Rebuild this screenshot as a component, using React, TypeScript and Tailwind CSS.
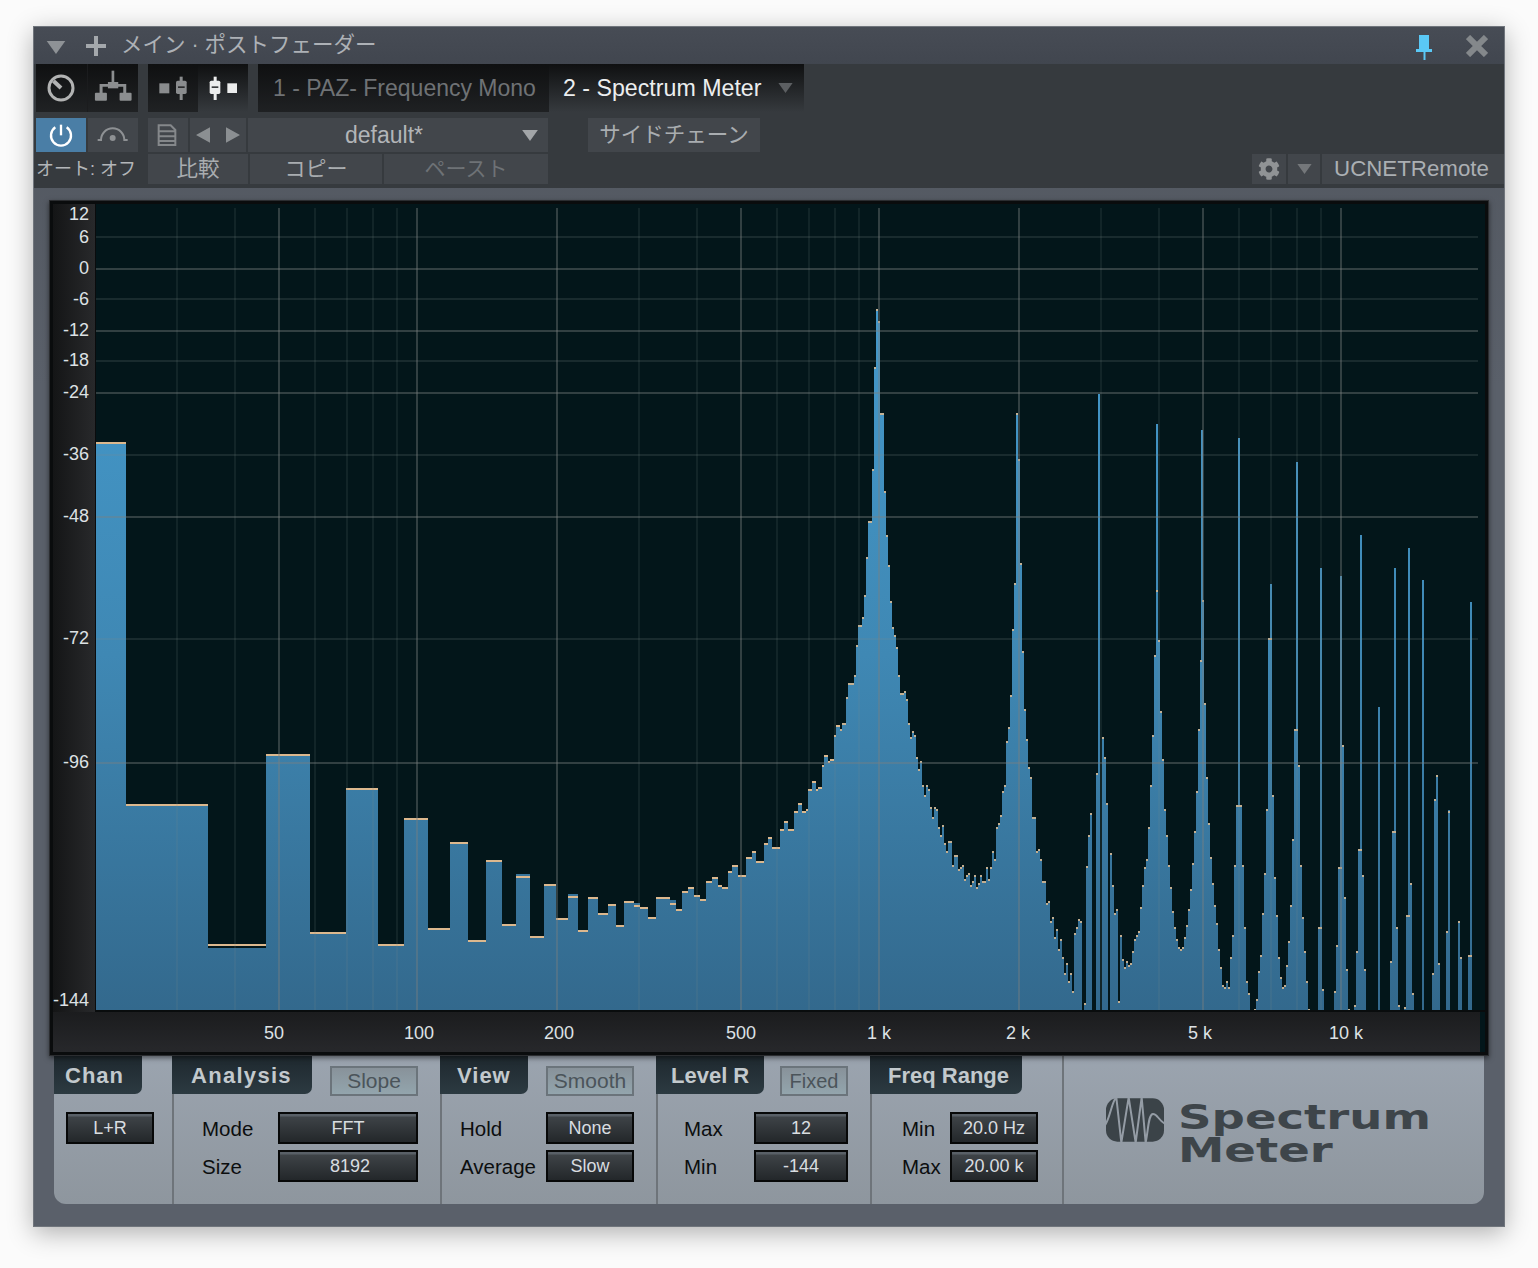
import React from "react";
import { FaCog } from "react-icons/fa";

const DATA = `96:442 126:804 208:944:948 266:754 310:932 346:788 378:944 404:818 428:928 450:842 468:940 486:860 502:924 516:876:874 530:936 544:884 556:918 568:896:894 578:930 588:897 598:913 608:904 616:925 624:901 634:905:903 640:907 648:917 656:897 670:903:900 676:909 682:891 688:887 694:895 700:899 706:881 712:877 718:885 722:887 728:871 732:865 738:875 746:857 752:851 756:861 764:843 768:837 772:847 780:829 784:821 788:829 794:811 798:803 802:811 806:809 808:789 812:781 816:789 818:787 822:765 824:755 828:761 830:759 834:735 836:725 840:729 842:723 846:697 848:683 854:675 856:645 858:625 862:617 864:595 866:557 868:521 872:469 874:367 876:309 878:321 880:413 884:491 886:535 888:565 890:601 892:627 894:635 896:647 898:675 900:693 904:691 906:699 908:723 910:737 912:731 914:735 916:757 918:769 920:761 922:785 924:795 926:785 928:789 930:807 932:817 934:807 936:809 938:827 940:835 942:825 944:843 946:851 948:841 952:865 954:855 958:869 960:867 962:865 964:879 966:875 968:873 970:885 972:881 974:875 976:887 978:883 980:875 982:881 986:867 988:879 990:867 992:851 994:859 996:827 998:823 1000:815 1002:791 1004:785 1006:741 1008:727 1010:695 1012:629 1014:583 1016:413 1018:459 1020:563 1022:651 1024:709 1026:739 1028:767 1030:777 1032:817 1036:851 1038:849 1040:859 1042:881 1046:903 1048:901 1050:921 1052:917 1054:937 1056:929 1058:949 1060:939 1062:957 1064:973 1066:963 1068:981 1070:973 1072:991 1074:933 1076:927 1078:919 1080:921 1082:1010 1084:1003 1086:866 1088:835 1090:813 1092:1010 1096:773 1098:1010 1102:737 1104:757 1106:803 1108:1010 1110:853 1112:885 1114:913 1116:909 1118:1001 1120:935 1122:959 1124:967 1126:961 1128:965 1130:963 1132:951 1134:939 1136:935 1138:931 1140:907 1142:885 1144:867 1146:859 1148:827 1150:785 1152:735 1154:655 1156:590 1158:640 1160:711 1162:759 1164:809 1166:835 1168:865 1170:887 1172:911 1174:927 1176:939 1178:947 1180:949 1182:947 1184:937 1186:925 1188:909 1190:889 1192:863 1194:831 1196:791 1198:729 1200:660 1202:600 1204:703 1206:777 1208:823 1210:857 1212:883 1214:905 1216:923 1218:949 1220:967 1222:985 1224:987 1226:981 1228:987 1230:957 1232:935 1234:865 1236:805 1238:805 1240:805 1242:865 1244:927 1246:981 1248:993 1250:1010 1254:1009 1256:999 1258:971 1260:955 1262:913 1264:873 1266:809 1268:638 1272:795 1274:877 1276:915 1278:957 1280:977 1282:987 1284:985 1286:965 1288:941 1290:905 1292:839 1294:729 1296:729 1298:765 1300:865 1302:917 1304:951 1306:981 1308:1009 1310:1010 1318:927 1320:927 1322:989 1324:1010 1334:991 1336:945 1338:867 1340:867 1342:745 1344:897 1346:969 1348:1009 1350:1010 1354:1005 1356:951 1358:849 1360:849 1362:875 1364:969 1366:1010 1378:1010 1390:961 1392:831 1394:831 1396:927 1398:1005 1400:1010 1404:1007 1406:915 1408:915 1410:883 1412:993 1414:1010 1432:973 1434:799 1436:775 1438:963 1440:1010 1446:931 1448:811 1450:1010 1458:921 1460:957 1462:1010 1468:955 1470:955 1472:1010 1478:1010`;

const cols = DATA.split(" ").map((s) => s.split(":").map(Number));
const areaPath = (() => {
  let d = "M96 1010";
  for (let i = 0; i < cols.length - 1; i++) {
    const [x, y, top] = cols[i];
    const t = top ?? y;
    const nx = cols[i + 1][0];
    d += `L${x} ${t}L${nx} ${t}`;
  }
  return d + "L1478 1010Z";
})();
const spikes = [
  [1098, 394], [1156, 424], [1201, 430], [1238, 438], [1270, 584], [1296, 462], [1320, 568], [1340, 576],
  [1360, 535], [1378, 707], [1394, 568], [1408, 548], [1422, 580], [1448, 810], [1470, 602],
];
const minorV = [177, 235, 315, 347, 373, 397, 639, 697, 777, 809, 835, 859, 1101, 1159, 1239, 1271, 1297, 1321];
const mainV = [279, 417, 557, 741, 879, 1019, 1203, 1341];
const minorH = [237, 299, 361, 455, 639];
const mainH = [269, 331, 393, 517, 763];
const yLabels: [string, number][] = [
  ["12", 214], ["6", 237], ["0", 268], ["-6", 299], ["-12", 330], ["-18", 360], ["-24", 392],
  ["-36", 454], ["-48", 516], ["-72", 638], ["-96", 762], ["-144", 1000],
];
const xLabels: [string, number][] = [
  ["50", 274], ["100", 419], ["200", 559], ["500", 741], ["1 k", 879], ["2 k", 1018], ["5 k", 1200], ["10 k", 1346],
];

function Spectrum() {
  return (
    <svg width="1390" height="808" viewBox="95 204 1390 808" className="block">
      <defs>
        <linearGradient id="blue" gradientUnits="userSpaceOnUse" x1="0" y1="300" x2="0" y2="1010">
          <stop offset="0" stopColor="#4499cb" />
          <stop offset="0.5" stopColor="#3f88b4" />
          <stop offset="1" stopColor="#33698d" />
        </linearGradient>
      </defs>
      <path d={areaPath} fill="url(#blue)" />
      {spikes.map(([x, y]) => (
        <rect key={x} x={x} y={y} width="2" height={1010 - y} fill="url(#blue)" />
      ))}
      {cols.slice(0, -1).map(([x, y], i) =>
        y >= 1010 ? null : <rect key={x} x={x} y={y} width={cols[i + 1][0] - x} height="2" fill="#dcb88e" opacity={i < 3 || x < 840 ? 1 : 0.85} />
      )}
      {minorV.map((x) => <rect key={x} x={x - 1} y="208" width="2" height="802" fill="#7f8a8c" opacity="0.13" />)}
      {minorH.map((y) => <rect key={y} x="96" y={y - 1} width="1382" height="2" fill="#7f8a8c" opacity="0.18" />)}
      {mainV.map((x) => <rect key={x} x={x - 1} y="208" width="2" height="802" fill="#7b7f80" opacity="0.4" />)}
      {mainH.map((y) => <rect key={y} x="96" y={y - 1} width="1382" height="2" fill="#7b7f80" opacity="0.4" />)}
      <rect x="95" y="1010" width="1390" height="2" fill="#090c0d" />
      <rect x="95" y="204" width="1" height="806" fill="#0a0c0d" />
    </svg>
  );
}

function Caret({ className }: { className: string }) {
  return (
    <svg viewBox="0 0 20 14" className={className} fill="currentColor"><path d="M0 0H20L10 14Z" /></svg>
  );
}

const ToolCell = ({ className, children }: { className: string; children?: React.ReactNode }) => (
  <div className={`flex items-center justify-center h-full bg-[#42464b] ${className}`}>{children}</div>
);

function Btn({ w, children }: { w: string; children: React.ReactNode }) {
  return (
    <div className={`${w} h-[32px] border-2 border-[#070808] bg-[linear-gradient(180deg,#596067_0,#596067_2px,#3e4347_3px,#23272a_100%)] text-[18px] text-[#d9dde0] flex items-center justify-center`}>
      {children}
    </div>
  );
}

function Tab({ w, children }: { w: string; children: React.ReactNode }) {
  return (
    <div className={`${w} h-[38px] shrink-0 rounded-br-[7px] bg-[linear-gradient(180deg,#1e282e,#2c3a41)] text-[22px] font-bold text-[#c2c9cd] flex items-center`}>
      {children}
    </div>
  );
}

function Toggle({ w, children, text }: { w: string; children: React.ReactNode; text: string }) {
  return (
    <div className={`${w} h-[30px] mt-[10px] border-2 border-[#6b747b] bg-[linear-gradient(180deg,#88929a,#93a5ad)] ${text} text-[#4b545a] flex items-center justify-center`}>
      {children}
    </div>
  );
}

function Row({ w, label, children }: { w: string; label: string; children: React.ReactNode }) {
  return (
    <div className="flex items-center h-[32px]">
      <span className={`${w} text-[20.5px] text-[#0c0e0f] pt-[2px]`}>{label}</span>
      {children}
    </div>
  );
}

export default function App() {
  return (
    <div className="w-[1538px] h-[1268px] bg-[#fbfbfb] pt-[26px] pl-[33px] font-['Liberation_Sans','Noto_Sans_CJK_JP',sans-serif] overflow-hidden">
      <div className="w-[1472px] h-[1201px] border border-[#70757c] bg-[linear-gradient(180deg,#50555d,#5a606a_30%)] shadow-[0_6px_24px_rgba(0,0,0,0.3)] flex flex-col">
        {/* Title bar */}
        <div className="h-[37px] shrink-0 bg-[linear-gradient(180deg,#474c55,#41464f)] flex items-center pl-[12px] pr-[16px] text-[#adb1b6]">
          <Caret className="w-[20px] h-[13px] text-[#8e9296] mt-[3px]" />
          <svg viewBox="0 0 20 20" className="w-[20px] h-[20px] ml-[20px] text-[#a4a8ac]" fill="currentColor"><path d="M8 0h4v8h8v4h-8v8H8v-8H0V8h8z" /></svg>
          <span className="ml-[15px] text-[21.5px] leading-none whitespace-pre">メイン · ポストフェーダー</span>
          <svg viewBox="0 0 16 25" className="w-[16px] h-[25px] ml-auto mt-[3px]" fill="#5ac8f5"><path d="M3 0h10v14h3v3H9.500v8h-2v-8H0v-3h3z" /></svg>
          <svg viewBox="0 0 22 22" className="w-[22px] h-[22px] ml-[34px] mt-[1px]" stroke="#84888b" strokeWidth="6"><path d="M2 2 20 20M20 2 2 20" /></svg>
        </div>

        {/* Toolbar */}
        <div className="h-[124px] shrink-0 bg-[#363a3e] pl-[2px] flex flex-col">
          <div className="h-[48px] flex shrink-0">
            <div className="w-[102px] flex gap-[1px] bg-[#1b1c1e]">
              <div className="flex-1 bg-[linear-gradient(180deg,#0f1011,#202224)] flex items-center justify-center">
                <svg viewBox="0 0 30 30" className="w-[30px] h-[30px]" fill="none" stroke="#b2b3b3" strokeWidth="3"><circle cx="15" cy="15" r="12" /><path d="M7.500 8 15 15" strokeWidth="4" /></svg>
              </div>
              <div className="flex-1 bg-[linear-gradient(180deg,#0f1011,#202224)]">
                <svg viewBox="156 0 150 144" className="w-full h-full">
                  <g fill="#8c8e90">
                    <rect x="226" y="20" width="8" height="40" />
                    <rect x="215" y="54" width="31" height="19" />
                    <path d="M190 60h80v28h-9V68h-62v20h-9z" />
                    <rect x="176" y="86" width="36" height="24" rx="3" />
                    <rect x="250" y="86" width="36" height="24" rx="3" />
                  </g>
                </svg>
              </div>
            </div>
            <div className="w-[100px] ml-[10px] flex">
              <div className="w-[50px] bg-[linear-gradient(180deg,#0f1011,#202224)]">
                <svg viewBox="336 0 150 144" className="w-full h-full">
                  <g fill="#8a8c8e">
                    <rect x="370" y="58" width="30" height="30" />
                    <rect x="431" y="38" width="9" height="70" />
                    <rect x="420" y="50" width="32" height="40" rx="5" />
                    <rect x="426" y="67" width="20" height="5" fill="#2a2b2c" />
                  </g>
                </svg>
              </div>
              <div className="w-[50px] bg-[linear-gradient(180deg,#0f1011,#363a3e)]">
                <svg viewBox="486 0 150 144" className="w-full h-full">
                  <g fill="#eceded">
                    <rect x="533" y="38" width="9" height="70" />
                    <rect x="521" y="50" width="32" height="40" rx="5" />
                    <rect x="527" y="67" width="20" height="5" fill="#3a3c3e" />
                    <rect x="574" y="58" width="29" height="29" />
                  </g>
                </svg>
              </div>
            </div>
            <div className="w-[291px] ml-[10px] bg-[linear-gradient(180deg,#0f1011,#1f2123)] flex items-center pl-[15px] text-[23px] text-[#6f7275] whitespace-nowrap">
              1 - PAZ- Frequency Mono
            </div>
            <div className="w-[255px] bg-[linear-gradient(180deg,#0f1011,#363a3e)] flex items-center pl-[14px] text-[23.2px] text-[#eceeef] whitespace-nowrap">
              2 - Spectrum Meter
              <Caret className="w-[15px] h-[10px] ml-[17px] text-[#5c5f62]" />
            </div>
          </div>

          <div className="h-[34px] mt-[6px] flex shrink-0">
            <div className="w-[50px] h-full bg-[#4a7ea6]">
              <svg viewBox="0 162 150 102" className="w-full h-full" fill="none" stroke="#fff" strokeWidth="7"><path d="M58 190a30 30 0 1 0 34 0" /><path d="M75 182v32" /></svg>
            </div>
            <ToolCell className="w-[50px] ml-[2px]">
              <svg viewBox="156 162 150 102" className="w-full h-full" fill="none" stroke="#8e9194" strokeWidth="6"><path d="M185 228h10a35 35 0 0 1 70 0h10" /><circle cx="230" cy="222" r="9" fill="#8e9194" stroke="none" /></svg>
            </ToolCell>
            <ToolCell className="w-[40px] ml-[10px]">
              <svg viewBox="336 162 120 102" className="w-full h-full" fill="none" stroke="#85888b" strokeWidth="6"><path d="M368 184h36l14 14v45h-50zM368 202h50M368 217h50M368 231h50" /></svg>
            </ToolCell>
            <ToolCell className="w-[56px] ml-[2px]">
              <svg viewBox="462 162 168 102" className="w-full h-full" fill="#8b8f92"><path d="M480 213l42-23v46zM570 190l42 23-42 23z" /></svg>
            </ToolCell>
            <ToolCell className="w-[300px] ml-[2px] relative">
              <span className="text-[23px] text-[#b2b5b8] ml-[-28px]">default*</span>
              <Caret className="absolute right-[10px] top-[12px] w-[16px] h-[11px] text-[#a2a5a8]" />
            </ToolCell>
            <ToolCell className="w-[172px] ml-[40px]">
              <span className="text-[21.5px] text-[#a9adb0]">サイドチェーン</span>
            </ToolCell>
          </div>

          <div className="h-[30px] mt-[2px] flex shrink-0 pr-[0px]">
            <div className="w-[102px] flex items-center text-[18px] text-[#b3b6b9] whitespace-pre">オート: オフ</div>
            <ToolCell className="w-[100px] ml-[10px]"><span className="text-[21.5px] text-[#a9adb0]">比較</span></ToolCell>
            <ToolCell className="w-[132px] ml-[2px]"><span className="text-[21px] text-[#a9adb0]">コピー</span></ToolCell>
            <ToolCell className="w-[164px] ml-[2px]"><span className="text-[21px] text-[#6e7276]">ペースト</span></ToolCell>
            <ToolCell className="w-[34px] ml-auto"><FaCog className="w-[22px] h-[22px] text-[#909395]" /></ToolCell>
            <ToolCell className="w-[32px] ml-[2px]"><Caret className="w-[15px] h-[10px] text-[#74777a]" /></ToolCell>
            <ToolCell className="w-[182px] ml-[2px]"><span className="text-[22.3px] text-[#abafb3] ml-[-3px]">UCNETRemote</span></ToolCell>
          </div>
        </div>

        {/* Spectrum frame */}
        <div className="relative z-10 w-[1440px] h-[856px] ml-[15px] mt-[12px] shrink-0 bg-[#2b2d30] p-[1px] shadow-[0_2px_5px_rgba(0,0,0,0.5)]">
          <div className="w-[1438px] h-[854px] bg-[#0a0c0d] p-[3px]">
            <div className="w-[1432px] h-[848px] bg-[#03161a] flex flex-col">
              <div className="flex h-[808px] shrink-0">
                <div className="relative w-[42px] h-[808px] bg-[linear-gradient(90deg,#141516,#28292b)] text-[18px] leading-none text-[#dde1e4]">
                  {yLabels.map(([t, y]) => (
                    <span key={t} className="absolute right-[6px] -translate-y-1/2" style={{ top: y - 204 }}>{t}</span>
                  ))}
                </div>
                <Spectrum />
              </div>
              <div className="relative w-[1427px] h-[40px] bg-[linear-gradient(180deg,#1b1c1e,#27282b)] text-[18px] leading-none text-[#dde1e4]">
                {xLabels.map(([t, x]) => (
                  <span key={t} className="absolute top-[12px] -translate-x-1/2 whitespace-pre" style={{ left: x - 53 }}>{t}</span>
                ))}
              </div>
            </div>
          </div>
        </div>

        {/* Bottom panel */}
        <div className="w-[1430px] h-[148px] ml-[20px] shrink-0 rounded-b-[12px] bg-[linear-gradient(180deg,#9ba4af,#8e969e)] flex overflow-hidden">
          <section className="w-[118px] flex flex-col">
            <Tab w="w-[88px] pl-[11px] tracking-[1px]">Chan</Tab>
            <div className="pl-[12px] pt-[18px]"><Btn w="w-[88px]">L+R</Btn></div>
          </section>

          <section className="w-[268px] flex flex-col">
            <div className="flex h-[38px]">
              <Tab w="w-[140px] pl-[19px] tracking-[1.300px]">Analysis</Tab>
              <div className="ml-[18px]"><Toggle w="w-[88px]" text="text-[21px]">Slope</Toggle></div>
            </div>
            <div className="flex-1 border-l-2 border-[#6e747a] pl-[28px] pt-[18px] flex flex-col gap-[6px]">
              <Row w="w-[76px]" label="Mode"><Btn w="w-[140px]">FFT</Btn></Row>
              <Row w="w-[76px]" label="Size"><Btn w="w-[140px] pl-[4px]">8192</Btn></Row>
            </div>
          </section>

          <section className="w-[216px] flex flex-col">
            <div className="flex h-[38px]">
              <Tab w="w-[88px] pl-[17px] tracking-[1px]">View</Tab>
              <div className="ml-[18px]"><Toggle w="w-[88px]" text="text-[21px]">Smooth</Toggle></div>
            </div>
            <div className="flex-1 border-l-2 border-[#6e747a] pl-[18px] pt-[18px] flex flex-col gap-[6px]">
              <Row w="w-[86px]" label="Hold"><Btn w="w-[88px]">None</Btn></Row>
              <Row w="w-[86px]" label="Average"><Btn w="w-[88px]">Slow</Btn></Row>
            </div>
          </section>

          <section className="w-[214px] flex flex-col">
            <div className="flex h-[38px]">
              <Tab w="w-[108px] pl-[15px]">Level R</Tab>
              <div className="ml-[16px]"><Toggle w="w-[68px]" text="text-[20px]">Fixed</Toggle></div>
            </div>
            <div className="flex-1 border-l-2 border-[#6e747a] pl-[26px] pt-[18px] flex flex-col gap-[6px]">
              <Row w="w-[70px]" label="Max"><Btn w="w-[94px]">12</Btn></Row>
              <Row w="w-[70px]" label="Min"><Btn w="w-[94px]">-144</Btn></Row>
            </div>
          </section>

          <section className="w-[192px] flex flex-col">
            <Tab w="w-[152px] pl-[18px]">Freq Range</Tab>
            <div className="flex-1 border-l-2 border-[#6e747a] pl-[30px] pt-[18px] flex flex-col gap-[6px]">
              <Row w="w-[48px]" label="Min"><Btn w="w-[88px]">20.0 Hz</Btn></Row>
              <Row w="w-[48px]" label="Max"><Btn w="w-[88px]">20.00 k</Btn></Row>
            </div>
          </section>

          <section className="flex-1 border-l-2 border-[#6e747a] pl-[42px] pt-[42px] flex items-start">
            <svg viewBox="33 25 174 130" className="w-[58px] h-[44px] shrink-0">
              <rect x="33" y="25" width="174" height="130" rx="34" fill="#3b4348" />
              <path d="M28 108C44 92 50 34 64 22L79 158 101 22 122 158 140 22 152 158C160 120 160 72 174 72 188 72 190 92 212 102" fill="none" stroke="#949ca5" strokeWidth="6" />
            </svg>
            <div className="ml-[14px] mt-[3px] font-['DejaVu_Sans',sans-serif] font-bold text-[34px] leading-[33px] text-[#3e454a] origin-left scale-x-[1.37]">
              <div>Spectrum</div>
              <div>Meter</div>
            </div>
          </section>
        </div>
      </div>
    </div>
  );
}
